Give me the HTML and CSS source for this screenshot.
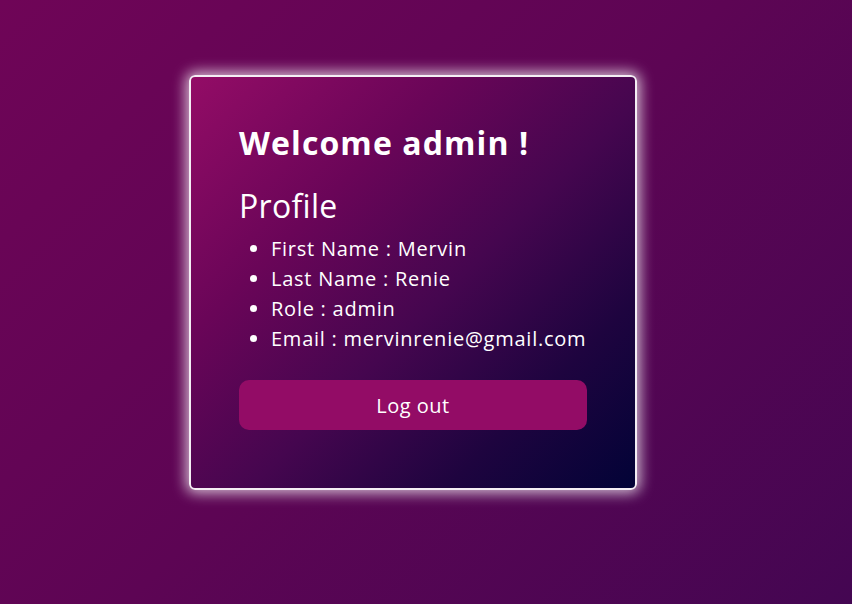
FILE: index.html
```html
<!DOCTYPE html>
<html>
<head>
<meta charset="utf-8">
<link rel="stylesheet" href="styles.css">
</head>
<body>
<main class="page">
  <section class="card">
    <h1 class="welcome">Welcome admin !</h1>
    <h2 class="profile-title">Profile</h2>
    <ul class="profile-list">
      <li>First Name : Mervin</li>
      <li>Last Name : Renie</li>
      <li>Role : admin</li>
      <li>Email : mervinrenie@gmail.com</li>
    </ul>
    <button class="logout">Log out</button>
  </section>
</main>
</body>
</html>
```
FILE: styles.css
```css
html, body {
  margin: 0;
  height: 100%;
}
body {
  font-family: "Open Sans", "Noto Sans", sans-serif;
  color: #fff;
  background: linear-gradient(135deg, #6f0557 0%, #5d0554 50%, #440652 100%);
}
.page {
  display: flex;
  align-items: flex-start;
  padding: 75px 0 0 189px;
}
.card {
  box-sizing: border-box;
  width: 448px;
  height: 415px;
  padding: 46px 48px 0 48px;
  border: 2px solid #f4eef4;
  border-radius: 6px;
  background: linear-gradient(135deg, #930c66 0%, #6a0558 30%, #45064f 55%, #1e043f 78%, #020337 100%);
  box-shadow: 0 0 14px 3px rgba(255, 255, 255, 0.75);
}
.welcome {
  margin: 0;
  font-size: 32px;
  line-height: 40px;
  font-weight: 700;
  letter-spacing: 1.1px;
}
.profile-title {
  margin: 23px 0 0;
  font-size: 32px;
  line-height: 40px;
  font-weight: 400;
  letter-spacing: 0.3px;
}
.profile-list {
  margin: 8px 0 0;
  padding-left: 32px;
  font-size: 20px;
  line-height: 30px;
  letter-spacing: 0.75px;
  white-space: nowrap;
}
.logout {
  display: block;
  width: 100%;
  height: 50px;
  margin-top: 26px;
  border: none;
  border-radius: 10px;
  background: #930c66;
  color: #fff;
  font-family: "Open Sans", "Noto Sans", sans-serif;
  font-size: 20px;
  letter-spacing: 0.5px;
  cursor: pointer;
}
```
